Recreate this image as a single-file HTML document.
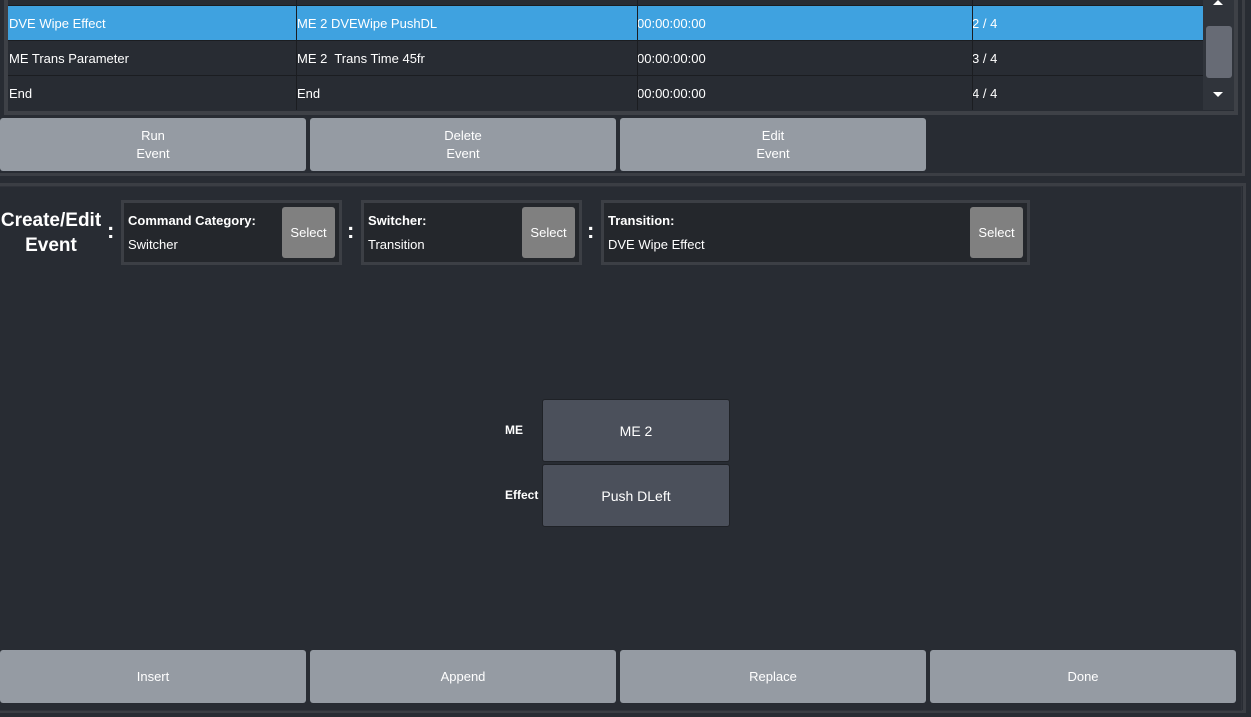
<!DOCTYPE html>
<html><head><meta charset="utf-8"><style>
body{margin:0;width:1251px;height:717px;background:#282c33;font-family:"Liberation Sans",sans-serif;color:#fff;position:relative;overflow:hidden}
div{position:absolute;box-sizing:border-box}
.row{left:8px;width:1195px;height:35px;font-size:13px;border-bottom:1px solid #1b1d21}
.row span{position:absolute;top:10px}
.vl{top:0;bottom:0;width:1px;background:#1b1d21}
.btn{background:#959ba3;border-radius:3px;font-size:13px;text-align:center;display:flex;align-items:center;justify-content:center;line-height:18px;color:#fff}
.frame{border:3px solid #3c3f45;background:#24272c}
.sel{background:#808080;border-radius:3px;font-size:13px;display:flex;align-items:center;justify-content:center;width:53px;height:51px;top:4px}
.lab{font-size:13px;font-weight:bold;left:4px;top:10px}
.val{font-size:13px;left:4px;top:34px}
.colon{font-size:22px;font-weight:bold;top:218px}
.me{background:#4b505b;border:1px solid #1f2227;border-radius:3px;font-size:14px;display:flex;align-items:center;justify-content:center;left:542px;width:188px;height:63px}
</style></head><body>
<!-- top panel -->
<div style="left:-4px;top:-4px;width:1249px;height:180px;border:3px solid #3b3e44"></div>
<div style="left:4px;top:-4px;width:1234px;height:119px;border:4px solid #3e4147;border-top:none"></div>
<div style="left:8px;top:0;width:1195px;height:6px;border-bottom:1px solid #1b1d21"></div>
<div class="row" style="top:6px;background:#3fa2e0"><span style="left:1px">DVE Wipe Effect</span><span style="left:289px">ME 2 DVEWipe PushDL</span><span style="left:629px">00:00:00:00</span><span style="left:964px">2 / 4</span></div>
<div class="row" style="top:41px"><span style="left:1px">ME Trans Parameter</span><span style="left:289px">ME 2&nbsp; Trans Time 45fr</span><span style="left:629px">00:00:00:00</span><span style="left:964px">3 / 4</span></div>
<div class="row" style="top:76px;border-bottom:none"><span style="left:1px">End</span><span style="left:289px">End</span><span style="left:629px">00:00:00:00</span><span style="left:964px">4 / 4</span></div>
<div class="vl" style="left:296px;height:110px"></div>
<div class="vl" style="left:637px;height:110px"></div>
<div class="vl" style="left:972px;height:110px"></div>
<div style="left:1203px;top:0;width:31px;height:110px;background:#30343b"></div>
<div style="left:1206px;top:26px;width:26px;height:52px;background:#676b75;border-radius:3px"></div>
<div style="left:1213px;top:0;width:0;height:0;border-left:5px solid transparent;border-right:5px solid transparent;border-bottom:5px solid #fff"></div>
<div style="left:1213px;top:92px;width:0;height:0;border-left:5px solid transparent;border-right:5px solid transparent;border-top:5px solid #fff"></div>
<div class="btn" style="left:0;top:118px;width:306px;height:53px">Run<br>Event</div>
<div class="btn" style="left:310px;top:118px;width:306px;height:53px">Delete<br>Event</div>
<div class="btn" style="left:620px;top:118px;width:306px;height:53px">Edit<br>Event</div>
<!-- lower panel -->
<div style="left:-4px;top:183px;width:1250px;height:530px;border:3px solid #3b3e44"></div>
<div style="left:-4px;top:186px;width:1246px;height:525px;border:1px solid #30333a"></div>
<div style="left:-2px;top:208px;width:106px;text-align:center;font-size:19px;font-weight:bold;line-height:25px">Create/Edit<br>Event</div>
<div class="colon" style="left:107px">:</div>
<div class="frame" style="left:121px;top:200px;width:221px;height:65px"><div class="lab">Command Category:</div><div class="val">Switcher</div><div class="sel" style="left:158px">Select</div></div>
<div class="colon" style="left:347px">:</div>
<div class="frame" style="left:361px;top:200px;width:221px;height:65px"><div class="lab">Switcher:</div><div class="val">Transition</div><div class="sel" style="left:158px">Select</div></div>
<div class="colon" style="left:587px">:</div>
<div class="frame" style="left:601px;top:200px;width:429px;height:65px"><div class="lab">Transition:</div><div class="val">DVE Wipe Effect</div><div class="sel" style="left:366px">Select</div></div>
<div style="left:505px;top:423px;font-size:12px;font-weight:bold">ME</div>
<div style="left:505px;top:488px;font-size:12px;font-weight:bold">Effect</div>
<div class="me" style="top:399px">ME 2</div>
<div class="me" style="top:464px">Push DLeft</div>
<div class="btn" style="left:0;top:650px;width:306px;height:53px">Insert</div>
<div class="btn" style="left:310px;top:650px;width:306px;height:53px">Append</div>
<div class="btn" style="left:620px;top:650px;width:306px;height:53px">Replace</div>
<div class="btn" style="left:930px;top:650px;width:306px;height:53px">Done</div>
</body></html>
